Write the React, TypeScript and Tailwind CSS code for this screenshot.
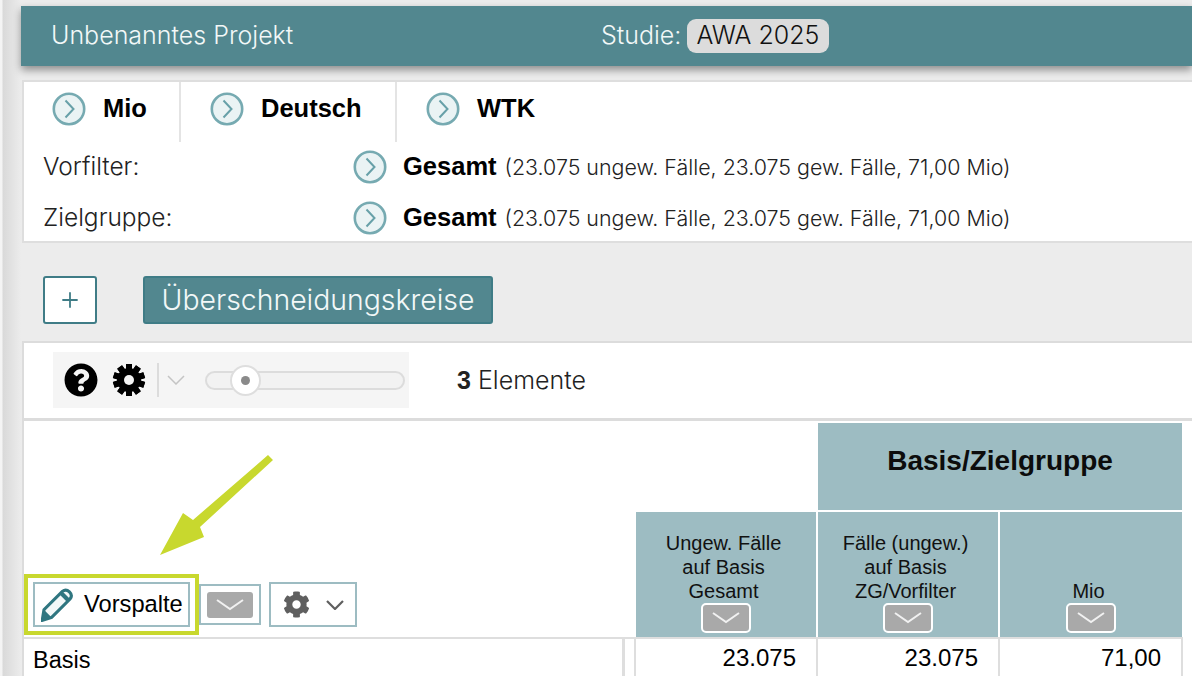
import { Plus } from 'lucide-react';
import { FaCog, FaQuestionCircle } from 'react-icons/fa';

const lightFont = "font-['Inter','Liberation_Sans',sans-serif] font-light";
const boldFont = "font-['Liberation_Sans',Arial,sans-serif] font-bold";
const plainFont = "font-['Liberation_Sans',Arial,sans-serif]";

function CircleArrow() {
  return (
    <svg width="34" height="34" viewBox="0 0 34 34" className="shrink-0">
      <circle cx="17" cy="17" r="15.2" fill="#eaf3f4" stroke="#76aab1" strokeWidth="2.6" />
      <path d="M13.5 8.5 L21.5 17 L13.5 25.5" fill="none" stroke="#67a0a8" strokeWidth="2" />
    </svg>
  );
}

function Chevron({ color, stroke, className = '' }: { color: string; stroke: number; className?: string }) {
  return (
    <svg width="18" height="10" viewBox="0 0 18 10" className={className}>
      <path d="M1 1 L9 9 L17 1" fill="none" stroke={color} strokeWidth={stroke} />
    </svg>
  );
}

function ToolbarGear() {
  const teeth = [0, 36, 72, 108, 144, 180, 216, 252, 288, 324];
  return (
    <svg width="34" height="34" viewBox="0 0 34 34" className="ml-[14px]">
      {teeth.map((deg) => (
        <rect key={deg} x="14" y="1" width="6" height="32" transform={`rotate(${deg} 17 17)`} fill="#000" />
      ))}
      <circle cx="17" cy="17" r="12" fill="#000" />
      <circle cx="17" cy="17" r="5" fill="#f5f5f5" />
    </svg>
  );
}

function DropBox({ framed = true }: { framed?: boolean }) {
  return (
    <div className={`flex h-[26px] w-[46px] items-center justify-center rounded-[3px] bg-[#a9a9a9] ${framed ? 'outline-2 outline-white' : ''}`}>
      <svg width="34" height="14" viewBox="0 0 34 14">
        <path d="M4 2 L17 11 L30 2" fill="none" stroke="#f1f1f1" strokeWidth="2" />
      </svg>
    </div>
  );
}

function Tab({ label, width, border = true }: { label: string; width: string; border?: boolean }) {
  return (
    <div className={`flex h-[60px] items-center gap-[17px] pb-[7px] ${width} ${border ? 'border-r-2 border-[#e4e4e4]' : ''}`}>
      <CircleArrow />
      <span className={`${boldFont} text-[25.5px] text-black`}>{label}</span>
    </div>
  );
}

function FilterRow({ label }: { label: string }) {
  return (
    <div className="flex h-[51px] items-center">
      <span className={`${lightFont} w-[310px] text-[24.5px] text-[#222]`}>{label}</span>
      <CircleArrow />
      <span className="ml-[16px] whitespace-nowrap">
        <span className={`${boldFont} text-[25.5px] text-black`}>Gesamt</span>
        <span className={`${lightFont} ml-[8px] text-[21.4px] text-[#222]`}>(23.075 ungew. Fälle, 23.075 gew. Fälle, 71,00 Mio)</span>
      </span>
    </div>
  );
}

function ColumnHead({ lines }: { lines: string[] }) {
  return (
    <div className="flex flex-col items-center justify-end bg-[#9dbcc2] pb-[6px]">
      <div className={`${plainFont} mb-[2px] pr-[5px] text-center text-[20px] leading-[24px] text-[#111]`}>
        {lines.map((line) => (
          <div key={line}>{line}</div>
        ))}
      </div>
      <DropBox />
    </div>
  );
}

export default function App() {
  return (
    <div className="h-[676px] w-[1192px] overflow-hidden bg-[linear-gradient(to_right,#f4f4f4_0,#f4f4f4_2px,#d9d9d9_3px,#ececec_21px)] pl-[21px] pt-[6px]">
      <header className="flex h-[60px] items-center bg-[#52878f] pl-[30px] shadow-[0_4px_8px_rgba(0,0,0,0.4)]">
        <span className={`${lightFont} w-[550px] text-[25px] text-[#f2f8f8]`}>Unbenanntes Projekt</span>
        <span className={`${lightFont} text-[25px] text-[#f2f8f8]`}>Studie:</span>
        <span className={`${lightFont} ml-[6px] flex h-[34px] items-center rounded-[9px] bg-[#dcdcdc] pl-[9px] pr-[10px] text-[25px] text-[#111]`}>AWA 2025</span>
      </header>

      <section className="ml-[1px] mt-[14px] h-[163px] border-2 border-r-0 border-[#dedede] bg-white">
        <div className="flex pl-[28px]">
          <Tab label="Mio" width="w-[129px]" />
          <div className="pl-[29px]">
            <Tab label="Deutsch" width="w-[187px]" />
          </div>
          <div className="pl-[29px]">
            <Tab label="WTK" width="w-[150px]" border={false} />
          </div>
        </div>
        <div className="-mt-[1px] pl-[19px]">
          <FilterRow label="Vorfilter:" />
          <FilterRow label="Zielgruppe:" />
        </div>
      </section>

      <div className="ml-[22px] mt-[33px] flex gap-[46px]">
        <button className="flex h-[48px] w-[54px] items-center justify-center rounded-[3px] border-2 border-[#3f7c86] bg-white">
          <Plus size={24} strokeWidth={1.8} color="#3f7c86" />
        </button>
        <button className={`${lightFont} flex h-[48px] w-[350px] items-center justify-center rounded-[3px] border-2 border-[#3f7c86] bg-[#52878f] text-[28.4px] text-[#f2f8f8]`}>
          Überschneidungskreise
        </button>
      </div>

      <section className="ml-[1px] mt-[17px] h-[80px] border-l-2 border-t-2 border-b-[3px] border-[#dcdcdc] bg-white pl-[29px] pt-[9px]">
        <div className="flex items-center">
          <div className="flex h-[56px] w-[356px] items-center bg-[#f5f5f5] pl-[11px]">
            <FaQuestionCircle size={34} color="#000" />
            <ToolbarGear />
            <div className="ml-[11px] h-[34px] w-[2px] bg-[#dcdcdc]" />
            <Chevron color="#c4c4c4" stroke={1.5} className="ml-[8px]" />
            <div className="relative ml-[20px] h-[19px] w-[200px] rounded-full border-2 border-[#dcdcdc] bg-[#f2f2f2]">
              <div className="absolute -top-[8px] left-[23px] flex h-[31px] w-[31px] items-center justify-center rounded-full border-2 border-[#dedede] bg-white">
                <div className="h-[9px] w-[9px] rounded-full bg-[#8a8a8a]" />
              </div>
            </div>
          </div>
          <span className={`${lightFont} ml-[48px] mt-[2px] text-[25px] text-[#222]`}>
            <span className={`${boldFont}`}>3</span> Elemente
          </span>
        </div>
      </section>

      <section className="relative ml-[1px] h-[255px] border-l-2 border-[#dcdcdc] bg-white pt-[2px]">
        <div className="grid h-[214px] grid-cols-[610px_180px_180px_182px] grid-rows-[87px_125px] gap-[2px]">
          <div className="col-span-2" />
          <div className={`${boldFont} col-span-2 flex items-center justify-center bg-[#9dbcc2] pb-[12px] text-[28px] text-[#0c0c0c]`}>
            Basis/Zielgruppe
          </div>
          <div className="flex items-end pb-[2px]">
            <div className="flex items-center">
              <div className="border-[4px] border-[#c8d82e] bg-white px-[5px] py-[4px]">
                <div className="flex h-[45px] w-[157px] items-center border-2 border-[#9dbcc2] pl-[6px]">
                  <svg width="32" height="34" viewBox="3 2 27 28" className="shrink-0">
                    <path d="M4 29 L5.5 20 L21 4.5 Q24 2 27 5 Q30 8 27.5 11 L12 26.5 Z" fill="#f3f8f8" stroke="#2f7680" strokeWidth="2.6" />
                    <path d="M4 29 L5.5 20 L12 26.5 Z" fill="#2f7680" />
                    <path d="M21 4.5 L27.5 11 L25 13.5 L18.5 7 Z" fill="#2f7680" />
                  </svg>
                  <span className={`${plainFont} ml-[11px] text-[23.7px] text-black`}>Vorspalte</span>
                </div>
              </div>
              <div className="flex h-[41px] w-[62px] items-center justify-center border-2 border-[#9dbcc2]">
                <DropBox framed={false} />
              </div>
              <div className="ml-[8px] flex h-[45px] w-[88px] items-center justify-center gap-[16px] border-2 border-[#9dbcc2]">
                <FaCog size={27} color="#5f5f5f" />
                <Chevron color="#5f5f5f" stroke={2.2} />
              </div>
            </div>
          </div>
          <ColumnHead lines={['Ungew. Fälle', 'auf Basis', 'Gesamt']} />
          <ColumnHead lines={['Fälle (ungew.)', 'auf Basis', 'ZG/Vorfilter']} />
          <ColumnHead lines={['Mio']} />
        </div>

        <div className={`${plainFont} flex h-[39px] w-[1159px] border-t-2 border-[#dedede] text-[24px] text-black`}>
          <div className="w-[598px] pl-[9px] pt-[4px] text-[23.5px]">Basis</div>
          <div className="h-full w-[14px] border-l-[3px] border-r-2 border-[#dedede]" />
          <div className="w-[182px] border-r-2 border-[#dedede] pr-[20px] pt-[1px] text-right">23.075</div>
          <div className="w-[182px] border-r-2 border-[#dedede] pr-[20px] pt-[1px] text-right">23.075</div>
          <div className="flex-1 border-r-2 border-[#dedede] pr-[20px] pt-[1px] text-right">71,00</div>
        </div>

        <svg className="absolute left-[136px] top-[34px]" width="114" height="100" viewBox="0 0 114 100">
          <path d="M108 0 L113 5 L40 72 L44 82 L0 100 L23 58 L33 65 Z" fill="#c8d82e" />
        </svg>
      </section>
    </div>
  );
}
